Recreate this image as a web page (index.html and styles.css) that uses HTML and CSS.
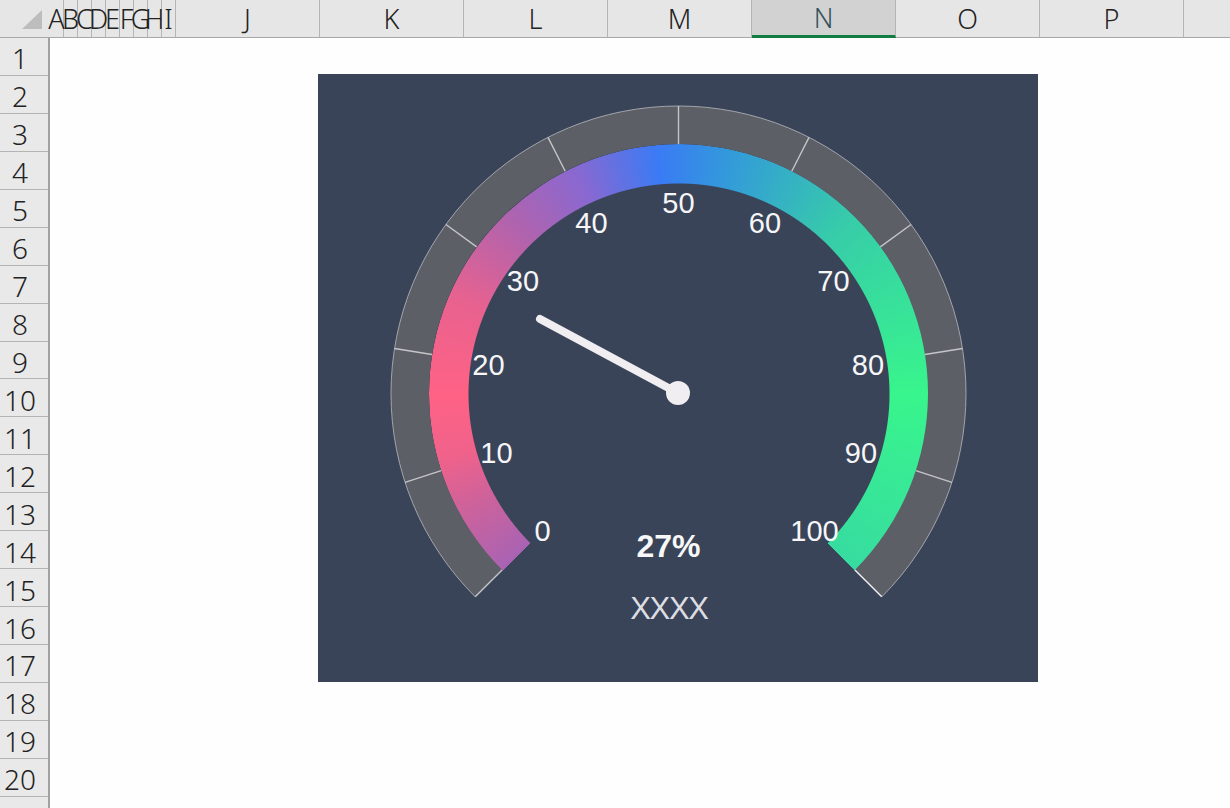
FILE: index.html
```html
<!DOCTYPE html>
<html lang="en">
<head>
  <meta charset="UTF-8" />
  <title>Gauge sheet</title>
  <link rel="stylesheet" href="styles.css">
</head>
<body>

  <div class="sheet">
    <div class="col-head">
      <div class="corner"><span class="corner-mark"></span></div>
      <div class="col narrow">A</div>
      <div class="col narrow">B</div>
      <div class="col narrow">C</div>
      <div class="col narrow">D</div>
      <div class="col narrow">E</div>
      <div class="col narrow">F</div>
      <div class="col narrow">G</div>
      <div class="col narrow">H</div>
      <div class="col narrow">I</div>
      <div class="col">J</div>
      <div class="col">K</div>
      <div class="col">L</div>
      <div class="col">M</div>
      <div class="col selected">N</div>
      <div class="col">O</div>
      <div class="col">P</div>
      <div class="col"></div>
    </div>

    <div class="sheet-body">
      <div class="row-head">
        <div class="row">1</div>
        <div class="row">2</div>
        <div class="row">3</div>
        <div class="row">4</div>
        <div class="row">5</div>
        <div class="row">6</div>
        <div class="row">7</div>
        <div class="row">8</div>
        <div class="row">9</div>
        <div class="row">10</div>
        <div class="row">11</div>
        <div class="row">12</div>
        <div class="row">13</div>
        <div class="row">14</div>
        <div class="row">15</div>
        <div class="row">16</div>
        <div class="row">17</div>
        <div class="row">18</div>
        <div class="row">19</div>
        <div class="row">20</div>
        <div class="row"></div>
      </div>

      <div class="cells">
        <div class="chart">
          <div class="gauge-fill"></div>
          <svg class="gauge" viewBox="0 0 720 608" width="720" height="608">
            <path class="track" d="M157.2 522.8 A287.5 287.5 0 1 1 563.8 522.8 L536.9 495.9 A249.5 249.5 0 1 0 184.1 495.9 Z" />
            <path class="track-edge" d="M157.2 522.8 A287.5 287.5 0 1 1 563.8 522.8" />

            <!-- ticks every 27deg, 10 segments -->
            <g class="ticks">
              <line x1="360.5" y1="32" x2="360.5" y2="70" transform="rotate(-135 360.5 319.5)" />
              <line x1="360.5" y1="32" x2="360.5" y2="70" transform="rotate(-108 360.5 319.5)" />
              <line x1="360.5" y1="32" x2="360.5" y2="70" transform="rotate(-81 360.5 319.5)" />
              <line x1="360.5" y1="32" x2="360.5" y2="70" transform="rotate(-54 360.5 319.5)" />
              <line x1="360.5" y1="32" x2="360.5" y2="70" transform="rotate(-27 360.5 319.5)" />
              <line x1="360.5" y1="32" x2="360.5" y2="70" />
              <line x1="360.5" y1="32" x2="360.5" y2="70" transform="rotate(27 360.5 319.5)" />
              <line x1="360.5" y1="32" x2="360.5" y2="70" transform="rotate(54 360.5 319.5)" />
              <line x1="360.5" y1="32" x2="360.5" y2="70" transform="rotate(81 360.5 319.5)" />
              <line x1="360.5" y1="32" x2="360.5" y2="70" transform="rotate(108 360.5 319.5)" />
              <line class="end" x1="360.5" y1="32" x2="360.5" y2="70" transform="rotate(135 360.5 319.5)" />
            </g>

            <g class="scale">
              <text x="224.5" y="467">0</text>
              <text x="178.5" y="389">10</text>
              <text x="170.5" y="301">20</text>
              <text x="205" y="217">30</text>
              <text x="273.5" y="159">40</text>
              <text x="360.5" y="139">50</text>
              <text x="447" y="159">60</text>
              <text x="515.5" y="217">70</text>
              <text x="550" y="301">80</text>
              <text x="543" y="389">90</text>
              <text x="496.5" y="467">100</text>
            </g>

            <line class="needle" x1="222" y1="245" x2="358" y2="318" />
            <circle class="hub" cx="360" cy="319" r="12" />

            <text class="value" x="350.5" y="483">27%</text>
            <text class="name" x="351" y="545">XXXX</text>
          </svg>
        </div>
      </div>
    </div>
  </div>

</body>
</html>
```

FILE: styles.css
```css
* {
  box-sizing: border-box;
}

body {
  margin: 0;
  background: #fefefe;
  font-family: 'Noto Sans', sans-serif;
  color: #222;
}

.sheet {
  width: 1230px;
  height: 808px;
  overflow: hidden;
}

/* column letters */
.col-head {
  display: flex;
  height: 38px;
  background: #e6e6e6;
  border-bottom: 1px solid #a8a8a8;
}

.corner {
  flex: 0 0 50px;
  position: relative;
}

.corner-mark {
  position: absolute;
  left: 22px;
  top: 10px;
  width: 20px;
  height: 19px;
  background: #bdbdbd;
  clip-path: polygon(100% 0, 100% 100%, 0 100%);
}

.col {
  flex: 0 0 144px;
  min-width: 0;
  display: flex;
  justify-content: center;
  align-items: center;
  font-size: 27px;
  font-weight: 300;
  line-height: 36px;
  border-right: 1px solid #b4b4b4;
}

.col.narrow {
  flex-basis: 14px;
}

.col.selected {
  background: #d2d2d2;
  border-bottom: 3px solid #107c41;
  margin-bottom: -1px;
  color: #33505a;
}

/* row numbers + grid */
.sheet-body {
  display: flex;
}

.row-head {
  flex: 0 0 50px;
  background: #e9e9e9;
  border-right: 2px solid #a0a0a0;
}

.row {
  height: 37.95px;
  display: flex;
  justify-content: center;
  align-items: center;
  font-size: 28px;
  font-weight: 300;
  padding: 4px 8px 0 0;
  border-bottom: 1px solid #b4b4b4;
}

.cells {
  flex: 1;
}

.chart {
  position: relative;
  width: 720px;
  height: 608px;
  margin: 36px 0 0 268px;
  background: #3a4459;
}

.gauge-fill {
  position: absolute;
  left: 110.5px;
  top: 69.5px;
  width: 500px;
  height: 500px;
  border-radius: 50%;
  background: conic-gradient(from 225deg,
    #a963b3 0deg,
    #d06299 18deg,
    #f0628b 30deg,
    #ff6285 45deg,
    #e8628f 68deg,
    #b263ac 90deg,
    #8a68d0 110deg,
    #3a7bf5 130deg,
    #3398dc 146deg,
    #37cda8 180deg,
    #38f58c 225deg,
    #37dca0 270deg,
    transparent 270.2deg);
  -webkit-mask: radial-gradient(circle closest-side, transparent 210px, #000 211px);
  mask: radial-gradient(circle closest-side, transparent 210px, #000 211px);
}

.gauge {
  position: absolute;
  left: 0;
  top: 0;
  font-family: 'Liberation Sans', sans-serif;
}

.track {
  fill: #5d5f67;
}

.track-edge {
  fill: none;
  stroke: #a3a5ab;
  stroke-width: 1;
}

.ticks line {
  stroke: #c4c5c9;
  stroke-width: 1.4;
}

.ticks line.end {
  stroke: #f2f2f2;
}

.scale text {
  fill: #f6f6f8;
  font-size: 29px;
  text-anchor: middle;
}

.needle {
  stroke: #f0eef0;
  stroke-width: 8;
  stroke-linecap: round;
}

.hub {
  fill: #f0eef0;
}

.value {
  fill: #f8f8f8;
  font-size: 32px;
  font-weight: bold;
  text-anchor: middle;
}

.name {
  fill: #dcdde2;
  font-size: 31px;
  letter-spacing: -1.3px;
  text-anchor: middle;
}
```
